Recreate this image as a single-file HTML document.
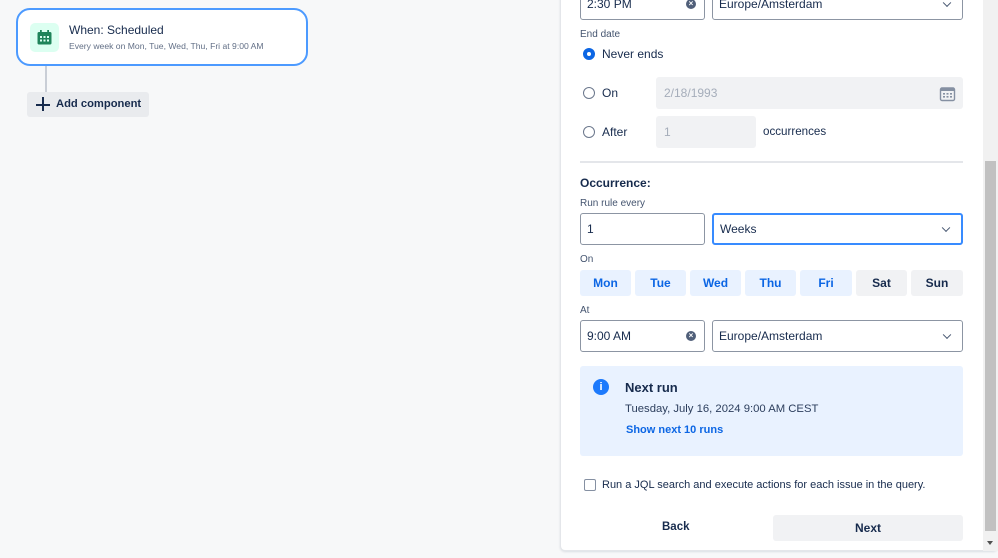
<!DOCTYPE html>
<html><head><meta charset="utf-8"><style>
*{box-sizing:border-box;margin:0;padding:0}
body{width:998px;height:558px;background:#f7f8f9;font-family:"Liberation Sans",sans-serif;color:#172b4d;position:relative;overflow:hidden}
.a{position:absolute}
.t{position:absolute;white-space:nowrap}
.inp{position:absolute;border:1.5px solid #8c95a3;border-radius:3px;background:#fff;font-size:12px;padding-left:6px;display:flex;align-items:center}
.dis{position:absolute;background:#f1f2f4;border-radius:3px;font-size:12px;color:#a5adba;padding-left:8px;display:flex;align-items:center}
.day{position:absolute;top:270px;height:26px;border-radius:3px;background:#e9f2ff;color:#0c66e4;font-size:12px;font-weight:bold;display:flex;align-items:center;justify-content:center}
.radio{position:absolute;width:12px;height:12px;border-radius:50%;border:1.5px solid #6b778c;background:#fff}
.chev{position:absolute;right:12px;top:50%;width:6px;height:6px;border-right:1.6px solid #44546f;border-bottom:1.6px solid #44546f;transform:translateY(-70%) rotate(45deg)}
.clr{position:absolute;right:8px;top:50%;margin-top:-5px;width:10px;height:10px;border-radius:50%;background:#505f79;color:#fff;font-size:8px;line-height:10px;text-align:center;font-weight:bold}
</style></head><body>
<div class="a" style="left:16px;top:8px;width:292px;height:58px;border:2px solid #4c9aff;border-radius:14px;background:#fff"></div>
<div class="a" style="left:30px;top:23px;width:29px;height:29px;border-radius:5px;background:#dcfff1"></div>
<svg class="a" style="left:36px;top:29px" width="17" height="17" viewBox="0 0 17 17"><rect x="1.5" y="3" width="14" height="12.5" rx="1.5" fill="#1f845a"/><rect x="4" y="1" width="1.8" height="3.5" fill="#1f845a"/><rect x="11.2" y="1" width="1.8" height="3.5" fill="#1f845a"/><g fill="#dcfff1"><rect x="4" y="7" width="2" height="2"/><rect x="7.5" y="7" width="2" height="2"/><rect x="11" y="7" width="2" height="2"/><rect x="4" y="10.5" width="2" height="2"/><rect x="7.5" y="10.5" width="2" height="2"/><rect x="11" y="10.5" width="2" height="2"/></g></svg>
<div class="t" style="left:69px;top:23px;font-size:12px">When: Scheduled</div>
<div class="t" style="left:69px;top:41px;font-size:8.6px;color:#626f86">Every week on Mon, Tue, Wed, Thu, Fri at 9:00 AM</div>
<div class="a" style="left:45px;top:66px;width:1.5px;height:26px;background:#c9ced6"></div>
<div class="a" style="left:27px;top:92px;width:122px;height:25px;background:#e9ebee;border-radius:3px"></div>
<div class="a" style="left:36px;top:104px;width:14px;height:1.8px;background:#172b4d"></div>
<div class="a" style="left:42px;top:97px;width:1.8px;height:14px;background:#172b4d"></div>
<div class="t" style="left:56px;top:98px;font-size:11.2px;font-weight:bold">Add component</div>

<div class="a" style="left:560px;top:-10px;width:438px;height:561px;background:#fff;border:1px solid #e4e6ea;border-radius:5px;box-shadow:0 1px 2px rgba(9,30,66,.12)"></div>
<div class="a" style="left:983px;top:0;width:15px;height:551px;background:#f1f1f1"></div>
<div class="a" style="left:985px;top:161px;width:11px;height:370px;background:#c1c1c1"></div>
<div class="a" style="left:987px;top:541px;width:0;height:0;border-left:3.5px solid transparent;border-right:3.5px solid transparent;border-top:4px solid #505050"></div>

<div class="inp" style="left:580px;top:-13px;width:125px;height:33px">2:30 PM<div class="clr">×</div></div>
<div class="inp" style="left:712px;top:-13px;width:251px;height:33px">Europe/Amsterdam<div class="chev"></div></div>
<div class="t" style="left:580px;top:29px;font-size:10px;color:#44546f">End date</div>
<div class="radio" style="left:583px;top:48px;border:4px solid #0c66e4"></div>
<div class="t" style="left:602px;top:47px;font-size:12px">Never ends</div>
<div class="radio" style="left:583px;top:87px"></div>
<div class="t" style="left:602px;top:86px;font-size:12px">On</div>
<div class="dis" style="left:656px;top:77px;width:307px;height:32px">2/18/1993</div>
<svg class="a" style="left:939px;top:85px" width="17" height="17" viewBox="0 0 17 17"><rect x="1.5" y="3" width="14" height="12.5" rx="1.5" fill="none" stroke="#8590a2" stroke-width="1.4"/><rect x="1.5" y="3" width="14" height="3" fill="#8590a2"/><g fill="#8590a2"><rect x="4" y="8" width="2" height="1.6"/><rect x="7.5" y="8" width="2" height="1.6"/><rect x="11" y="8" width="2" height="1.6"/><rect x="4" y="11" width="2" height="1.6"/><rect x="7.5" y="11" width="2" height="1.6"/><rect x="11" y="11" width="2" height="1.6"/></g></svg>
<div class="radio" style="left:583px;top:126px"></div>
<div class="t" style="left:602px;top:125px;font-size:12px">After</div>
<div class="dis" style="left:656px;top:116px;width:100px;height:32px">1</div>
<div class="t" style="left:763px;top:125px;font-size:11.6px">occurrences</div>
<div class="a" style="left:580px;top:161px;width:383px;height:2px;background:#e4e6ea"></div>
<div class="t" style="left:580px;top:176px;font-size:12px;font-weight:bold">Occurrence:</div>
<div class="t" style="left:580px;top:198px;font-size:10px;color:#44546f">Run rule every</div>
<div class="inp" style="left:580px;top:213px;width:125px;height:32px">1</div>
<div class="inp" style="left:712px;top:213px;width:251px;height:32px;border:2px solid #388bff">Weeks<div class="chev"></div></div>
<div class="t" style="left:580px;top:254px;font-size:10px;color:#44546f">On</div>
<div class="day" style="left:580px;width:51px">Mon</div>
<div class="day" style="left:635px;width:51px">Tue</div>
<div class="day" style="left:690px;width:51px">Wed</div>
<div class="day" style="left:745px;width:51px">Thu</div>
<div class="day" style="left:800px;width:52px">Fri</div>
<div class="day" style="left:856px;width:51px;background:#f1f2f4;color:#172b4d">Sat</div>
<div class="day" style="left:911px;width:52px;background:#f1f2f4;color:#172b4d">Sun</div>
<div class="t" style="left:580px;top:305px;font-size:10px;color:#44546f">At</div>
<div class="inp" style="left:580px;top:320px;width:125px;height:32px">9:00 AM<div class="clr">×</div></div>
<div class="inp" style="left:712px;top:320px;width:251px;height:32px">Europe/Amsterdam<div class="chev"></div></div>
<div class="a" style="left:580px;top:366px;width:383px;height:90px;background:#e9f2ff;border-radius:3px"></div>
<div class="a" style="left:593px;top:379px;width:16px;height:16px;border-radius:50%;background:#1d7afc;color:#fff;font-size:11px;font-weight:bold;text-align:center;line-height:16px">i</div>
<div class="t" style="left:625px;top:380px;font-size:13px;font-weight:bold">Next run</div>
<div class="t" style="left:625px;top:403px;font-size:11.3px;color:#2c3e5d">Tuesday, July 16, 2024 9:00 AM CEST</div>
<div class="t" style="left:626px;top:424px;font-size:11px;font-weight:bold;color:#0c66e4">Show next 10 runs</div>
<div class="a" style="left:584px;top:479px;width:12px;height:12px;border:1.5px solid #8590a2;border-radius:2px"></div>
<div class="t" style="left:602px;top:479px;font-size:11px">Run a JQL search and execute actions for each issue in the query.</div>
<div class="t" style="left:662px;top:521px;font-size:11.5px;font-weight:bold">Back</div>
<div class="a" style="left:773px;top:515px;width:190px;height:26px;background:#f1f2f4;border-radius:3px;font-size:12px;font-weight:bold;display:flex;align-items:center;justify-content:center">Next</div>
</body></html>
